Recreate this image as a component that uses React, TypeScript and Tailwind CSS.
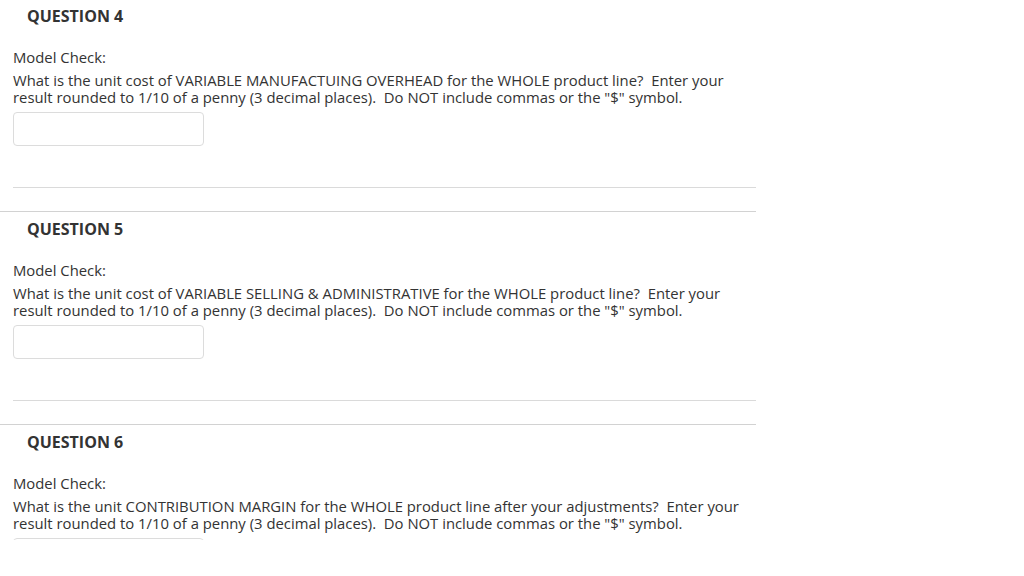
const questions = [
  {
    n: 4,
    lines: [
      "What is the unit cost of VARIABLE MANUFACTUING OVERHEAD for the WHOLE product line?  Enter your",
      'result rounded to 1/10 of a penny (3 decimal places).  Do NOT include commas or the "$" symbol.',
    ],
  },
  {
    n: 5,
    lines: [
      "What is the unit cost of VARIABLE SELLING & ADMINISTRATIVE for the WHOLE product line?  Enter your",
      'result rounded to 1/10 of a penny (3 decimal places).  Do NOT include commas or the "$" symbol.',
    ],
  },
  {
    n: 6,
    lines: [
      "What is the unit CONTRIBUTION MARGIN for the WHOLE product line after your adjustments?  Enter your",
      'result rounded to 1/10 of a penny (3 decimal places).  Do NOT include commas or the "$" symbol.',
    ],
  },
];

function Question({ n, lines, first }: { n: number; lines: string[]; first?: boolean }) {
  return (
    <section
      className={`h-[213px] border-t border-[#d2d2d2] ${first ? "-mt-[2px]" : ""}`}
    >
      <h2 className="mt-[7px] pl-[27px] text-[16px] font-bold leading-[21px] text-[#333]">
        QUESTION {n}
      </h2>
      <div className="pl-[13px]">
        <p className="mt-[22px] text-[14.85px] leading-[17px] text-[#333]">Model Check:</p>
        <p className="mt-[6px] whitespace-pre text-[14.85px] leading-[17px] text-[#333]">
          {lines[0]}
          <br />
          {lines[1]}
        </p>
        <input
          type="text"
          aria-label={`Answer for question ${n}`}
          className="mt-[6px] block h-[34px] w-[191px] rounded-[4px] border border-[#dcdcdc] bg-white px-2 text-[14px] outline-none"
        />
        <div className="mt-[41px] h-px bg-[#dadada]" />
      </div>
    </section>
  );
}

export default function App() {
  return (
    <div
      className="h-[576px] w-[1024px] bg-white"
      style={{ fontFamily: '"Open Sans", "Noto Sans", sans-serif' }}
    >
      <div className="h-[540px] w-[756px] overflow-hidden">
        {questions.map((q, i) => (
          <Question key={q.n} n={q.n} lines={q.lines} first={i === 0} />
        ))}
      </div>
    </div>
  );
}
